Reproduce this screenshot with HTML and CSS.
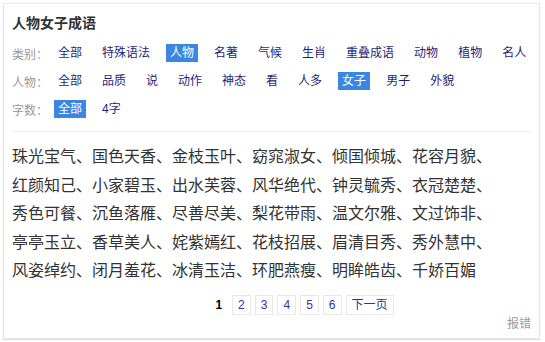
FILE: index.html
```html
<!DOCTYPE html>
<html lang="zh-CN">
<head>
    <meta charset="UTF-8">
    <meta name="viewport" content="width=device-width, initial-scale=1.0">
    <title>人物女子成语</title>
    <link rel="stylesheet" href="styles.css">
</head>
<body>
    <div class="card">
        <h1 class="title">人物女子成语</h1>
        <div class="filters">
            <div class="row">
                <span class="label">类别：</span>
                <a href="#">全部</a>
                <a href="#">特殊语法</a>
                <a href="#" class="active">人物</a>
                <a href="#">名著</a>
                <a href="#">气候</a>
                <a href="#">生肖</a>
                <a href="#">重叠成语</a>
                <a href="#">动物</a>
                <a href="#">植物</a>
                <a href="#">名人</a>
            </div>
            <div class="row">
                <span class="label">人物：</span>
                <a href="#">全部</a>
                <a href="#">品质</a>
                <a href="#">说</a>
                <a href="#">动作</a>
                <a href="#">神态</a>
                <a href="#">看</a>
                <a href="#">人多</a>
                <a href="#" class="active">女子</a>
                <a href="#">男子</a>
                <a href="#">外貌</a>
            </div>
            <div class="row">
                <span class="label">字数：</span>
                <a href="#" class="active">全部</a>
                <a href="#">4字</a>
            </div>
        </div>
        <ul class="idioms">
            <li>珠光宝气、</li><li>国色天香、</li><li>金枝玉叶、</li><li>窈窕淑女、</li><li>倾国倾城、</li><li>花容月貌、</li>
            <li>红颜知己、</li><li>小家碧玉、</li><li>出水芙蓉、</li><li>风华绝代、</li><li>钟灵毓秀、</li><li>衣冠楚楚、</li>
            <li>秀色可餐、</li><li>沉鱼落雁、</li><li>尽善尽美、</li><li>梨花带雨、</li><li>温文尔雅、</li><li>文过饰非、</li>
            <li>亭亭玉立、</li><li>香草美人、</li><li>姹紫嫣红、</li><li>花枝招展、</li><li>眉清目秀、</li><li>秀外慧中、</li>
            <li>风姿绰约、</li><li>闭月羞花、</li><li>冰清玉洁、</li><li>环肥燕瘦、</li><li>明眸皓齿、</li><li>千娇百媚</li>
        </ul>
        <div class="pager">
            <span class="current">1</span>
            <a href="#">2</a>
            <a href="#">3</a>
            <a href="#">4</a>
            <a href="#">5</a>
            <a href="#">6</a>
            <a href="#">下一页</a>
        </div>
        <div class="report"><a href="#">报错</a></div>
    </div>
</body>
</html>
```
FILE: styles.css
```css
body {
    margin: 0;
    padding: 3px;
    background-color: #fff;
    font-family: "Liberation Sans", "Noto Sans CJK SC", sans-serif;
}
a {
    text-decoration: none;
}
.card {
    box-sizing: border-box;
    width: 537px;
    padding: 9px 8px 5px;
    border: 1px solid #e6e6e6;
    box-shadow: 0 1px 1px #e0e0e0;
}
.title {
    margin: 0;
    font-size: 14px;
    line-height: 20px;
    font-weight: bold;
    color: #333;
}
.filters {
    margin-top: 6px;
    padding-bottom: 8px;
    border-bottom: 1px solid #eee;
}
.row {
    display: flex;
    align-items: center;
    height: 28px;
    font-size: 12px;
    white-space: nowrap;
}
.row .label {
    flex-shrink: 0;
    width: 36px;
    color: #999;
}
.row a {
    flex-shrink: 0;
    margin: 0 6px;
    padding: 0 4px;
    line-height: 18px;
    color: #1f1f7a;
}
.row a.active {
    background-color: #3d86e0;
    color: #fff;
}
.idioms {
    display: flex;
    flex-wrap: wrap;
    margin: 0;
    padding: 11px 0 0;
    list-style: none;
    font-size: 16px;
    line-height: 28.5px;
    color: #333;
}
.pager {
    display: flex;
    justify-content: center;
    margin-top: 9px;
    padding-left: 60px;
    font-size: 12px;
}
.pager a,
.pager span {
    margin: 0 2px;
    padding: 0 5px;
    line-height: 18px;
    border: 1px solid #e8e8e8;
    color: #33339a;
}
.pager .current {
    border-color: transparent;
    font-weight: bold;
    color: #000;
}
.report {
    text-align: right;
    font-size: 12px;
    line-height: 18px;
}
.report a {
    color: #999;
}
```
